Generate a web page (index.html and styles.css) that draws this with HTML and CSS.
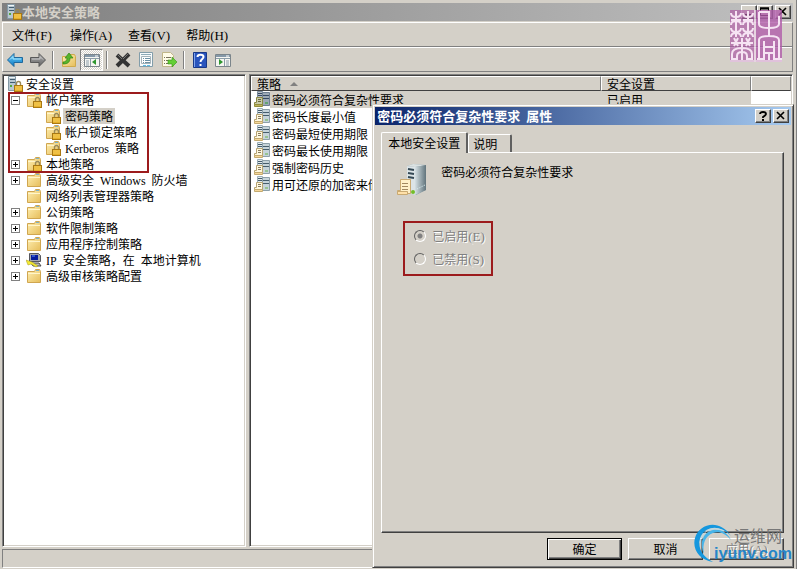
FILE: index.html
```html
<!DOCTYPE html>
<html lang="zh-CN">
<head>
<meta charset="utf-8">
<title>本地安全策略</title>
<link rel="stylesheet" href="styles.css">
</head>
<body>
<svg class="sprite" aria-hidden="true">
  <defs>
    <linearGradient id="gold" x1="0" y1="0" x2="1" y2="1"><stop offset="0" stop-color="#fff0b4"/><stop offset="1" stop-color="#e6bd5a"/></linearGradient>
    <linearGradient id="steel" x1="0" y1="0" x2="1" y2="0"><stop offset="0" stop-color="#d5e0e4"/><stop offset="1" stop-color="#61747c"/></linearGradient>
    <linearGradient id="blue" x1="0" y1="0" x2="0" y2="1"><stop offset="0" stop-color="#6fd0fa"/><stop offset="1" stop-color="#0b78c4"/></linearGradient>
    <linearGradient id="grey" x1="0" y1="0" x2="0" y2="1"><stop offset="0" stop-color="#b0b0b0"/><stop offset="1" stop-color="#636363"/></linearGradient>
  </defs>
  <symbol id="lock" viewBox="0 0 16 16">
    <path d="M9.5 10V7.5a2 2 0 0 1 4 0V10" fill="none" stroke="#9a8a58" stroke-width="1.4"/>
    <rect x="7.5" y="9.5" width="8" height="6" fill="#e5ae28" stroke="#a97812"/>
    <path d="M8 11h7M8 13h7" stroke="#ffdc70" stroke-width=".8"/>
  </symbol>
  <symbol id="folder" viewBox="0 0 16 16">
    <path d="M1.5 3.5h7l1-2h4l1 2v11h-13z" fill="url(#gold)" stroke="#d0a650"/>
    <path d="M10 2.5h3" stroke="#7eb2c8"/><path d="M2 5.5h12" stroke="#fff5cb"/>
  </symbol>
  <symbol id="folder-lock" viewBox="0 0 16 16"><use href="#folder"/><use href="#lock"/></symbol>
  <symbol id="server-lock" viewBox="0 0 16 16">
    <path d="M1.5.5h7v14h-7z" fill="#b9c8d1" stroke="#8499a5"/>
    <path d="M3 3.5h5M3 6.5h5" stroke="#425d70"/><path d="M2 1.5h6" stroke="#eff5f7"/><path d="M3 10h2" stroke="#55a83a" stroke-width="2"/>
    <use href="#lock"/>
  </symbol>
  <symbol id="policy" viewBox="0 0 16 16">
    <path d="M3.5.5h5v12h-5z" fill="#e2eaed" stroke="#9baeb7"/><path d="M8.5 1.5h7v13h-7z" fill="#c6d4da" stroke="#8da0aa"/>
    <path d="M4 2.5h4M4 4.5h4M9 4.5h6M9 7.5h6" stroke="#475e6c"/><path d="M11 12h3" stroke="#69b348"/>
    <path d="M2.5 6.5h6v7H.5v-2h2z" fill="#fff8df" stroke="#b8a472"/><path d="M4 8.5h3M4 10.5h3" stroke="#887c60"/>
    <path d="M.5 13.5h8v2h-8z" fill="#f6d79a" stroke="#c3aa6f"/>
  </symbol>
  <symbol id="big-policy" viewBox="0 0 32 32">
    <path d="M10 2l6-2 13 1v25l-10 5-9-2z" fill="#8fa0a7"/><path d="M10 2l6-2 13 1-11 2z" fill="#dbe2e2"/><path d="M18 3l11-2v25l-11 5z" fill="url(#steel)"/>
    <path d="M10 2l8 1v28l-8-2z" fill="#dce4e7"/><path d="M11 5l6 1M11 9l6 1M11 13l6 1" stroke="#354955" stroke-width="2"/>
    <path d="M20 25l8-4" stroke="#d8eef0" stroke-dasharray="1 1"/><circle cx="16" cy="28" r="2" fill="#74bd28"/>
    <path d="M3.5 15.5h10v14h-13v-3h3z" fill="#fff0c9" stroke="#c9a971"/><path d="M5 19.5h6M5 22.5h6M5 25.5h6" stroke="#a18861"/>
    <path d="M.5 27.5h10v3H.5z" fill="#ffe0a8" stroke="#c9a971"/>
  </symbol>
  <symbol id="ip" viewBox="0 0 16 16">
    <path d="M3.5 1.5h9l2 2v6h-11z" fill="#a6a8ae" stroke="#55565d"/><path d="M5 3h7v5H5z" fill="#061c9e"/><path d="M6 4h3" stroke="#5b8dfd"/>
    <path d="M5 11h8l2 3H7z" fill="#b7b7b7" stroke="#4b4b50"/><path d="M0 8l6 2 6 4-2 1-5-3-3 1z" fill="#f5ea32" stroke="#a29924" stroke-width=".5"/>
  </symbol>
  <symbol id="back" viewBox="0 0 16 16"><path d="M.5 8L7 1.5v4h8.500v5H7v4z" fill="url(#blue)" stroke="#20699d"/><path d="M3 7.5l3-3v2.500h8" fill="none" stroke="#a7e8ff"/></symbol>
  <symbol id="forward" viewBox="0 0 16 16"><path d="M15.500 8L9 1.500v4H.5v5H9v4z" fill="url(#grey)" stroke="#595959"/><path d="M2 7h8V4.500l3 3" fill="none" stroke="#c7c7c7"/></symbol>
  <symbol id="up" viewBox="0 0 16 16"><path d="M1.500 4.500h6l1-2h5l1 2v10h-13z" fill="url(#gold)" stroke="#cfaa4d"/><path d="M2 10c3 0 4-2 4-4H4l4-5 4 5H9c0 4-2 6-7 6z" fill="#57b52b" stroke="#318414" stroke-width=".7"/></symbol>
  <symbol id="pane-left" viewBox="0 0 16 16"><path d="M.5 2.500h15v12H.5z" fill="#f6f6f2" stroke="#7b858b"/><path d="M1 3h14v2H1z" fill="#8598a8"/><path d="M1 6.500h14M6.500 7v7M2 9h3M2 11h3M2 13h3" stroke="#8c9da9"/><path d="M12 7v6l-4-3z" fill="#2d962f"/><path d="M11 4h3" stroke="#fff"/></symbol>
  <symbol id="pane-right" viewBox="0 0 16 16"><path d="M.5 2.500h15v12H.5z" fill="#f6f6f2" stroke="#7b858b"/><path d="M1 3h14v2H1z" fill="#8598a8"/><path d="M1 6.500h14M9.500 7v7M11 9h3M11 11h3M11 13h3" stroke="#8c9da9"/><path d="M4 7v6l4-3z" fill="#2d962f"/><path d="M11 4h3" stroke="#fff"/></symbol>
  <symbol id="delete" viewBox="0 0 16 16"><path d="M2 3l12 11M14 2L2 14" stroke="#333" stroke-width="4"/><path d="M2 2l5 5M14 1L8 7" stroke="#777"/></symbol>
  <symbol id="props" viewBox="0 0 16 16"><path d="M1.500.5h13v14h-13z" fill="#f8fbfc" stroke="#829daa"/><path d="M3 2.500h10" stroke="#8eabb8"/><path d="M3.500 4.500h9v7h-9z" fill="#fff" stroke="#a4b3ba"/><path d="M5 6.500h1M7 6.500h5M5 8.500h1M7 8.500h5M5 10.500h1M7 10.500h5" stroke="#6c91a5"/><path d="M5 13.500h3M9 13.500h3" stroke="#5ebfe8"/></symbol>
  <symbol id="export" viewBox="0 0 16 16"><path d="M1.500.5h8l3 3v11h-11z" fill="#fffbe7" stroke="#c0b68a"/><path d="M3 5.500h1M5 5.500h5M3 8.500h1M5 8.500h4M3 11.500h1M5 11.500h4" stroke="#78715b"/><path d="M7 8h4V5l5 5-5 5v-3H7z" fill="#64cf35" stroke="#368e18" stroke-width=".6"/></symbol>
  <symbol id="help" viewBox="0 0 16 16"><path d="M1.500.5h13v15h-13z" fill="#2954bd" stroke="#183887"/><path d="M2.500 1v14" stroke="#7ea3ed"/><path d="M5.500 5c0-3 6-3 6 0 0 2-3 2-3 5" fill="none" stroke="#fff" stroke-width="2"/><path d="M7.500 12h2v2h-2z" fill="#fff"/></symbol>
</svg>

<main class="window">
  <header class="titlebar inactive">
    <svg class="icon"><use href="#server-lock"/></svg>
    <h1>本地安全策略</h1>
    <div class="caption-buttons">
      <button class="caption" aria-label="最小化"><svg viewBox="0 0 12 10"><path d="M2 8h6" stroke="#000" stroke-width="2"/></svg></button>
      <button class="caption" aria-label="最大化"><svg viewBox="0 0 12 10"><path d="M1.500 1v7.500h8V1M1 1h9" fill="none" stroke="#000"/><path d="M1 1.500h9" stroke="#000" stroke-width="2"/></svg></button>
      <button class="caption close" aria-label="关闭"><svg viewBox="0 0 12 10"><path d="M2 1l7 7M9 1L2 8" stroke="#000" stroke-width="1.600"/></svg></button>
    </div>
  </header>
  <div class="bars">
    <nav class="menubar">
      <button>文件<span class="key">(F)</span></button><button>操作<span class="key">(A)</span></button><button>查看<span class="key">(V)</span></button><button>帮助<span class="key">(H)</span></button>
    </nav>
    <div class="toolbar">
      <button aria-label="后退"><svg class="icon"><use href="#back"/></svg></button>
      <button aria-label="前进"><svg class="icon"><use href="#forward"/></svg></button>
      <span class="separator"></span>
      <button aria-label="上一级"><svg class="icon"><use href="#up"/></svg></button>
      <button class="pressed" aria-label="显示控制台树"><svg class="icon"><use href="#pane-left"/></svg></button>
      <span class="separator"></span>
      <button aria-label="删除"><svg class="icon"><use href="#delete"/></svg></button>
      <button aria-label="属性"><svg class="icon"><use href="#props"/></svg></button>
      <button aria-label="导出列表"><svg class="icon"><use href="#export"/></svg></button>
      <span class="separator"></span>
      <button aria-label="帮助"><svg class="icon"><use href="#help"/></svg></button>
      <button aria-label="显示操作窗格"><svg class="icon"><use href="#pane-right"/></svg></button>
    </div>
  </div>

  <div class="panes">
    <section class="pane tree-pane">
      <div class="root"><svg class="icon"><use href="#server-lock"/></svg><span class="label">安全设置</span></div>
      <ul class="tree">
        <li><div class="node"><button class="expander" aria-label="折叠"></button><svg class="icon"><use href="#folder-lock"/></svg><span class="label">帐户策略</span></div>
          <ul>
            <li class="node"><svg class="icon"><use href="#folder-lock"/></svg><span class="label selected">密码策略</span></li>
            <li class="node"><svg class="icon"><use href="#folder-lock"/></svg><span class="label">帐户锁定策略</span></li>
            <li class="node"><svg class="icon"><use href="#folder-lock"/></svg><span class="label"><span class="latin">Kerberos</span><span class="space"> </span>策略</span></li>
          </ul>
        </li>
        <li class="node"><button class="expander plus" aria-label="展开"></button><svg class="icon"><use href="#folder-lock"/></svg><span class="label">本地策略</span></li>
        <li class="node"><button class="expander plus" aria-label="展开"></button><svg class="icon"><use href="#folder"/></svg><span class="label">高级安全<span class="space"> </span><span class="latin">Windows</span><span class="space"> </span>防火墙</span></li>
        <li class="node"><span class="no-expander"></span><svg class="icon"><use href="#folder"/></svg><span class="label">网络列表管理器策略</span></li>
        <li class="node"><button class="expander plus" aria-label="展开"></button><svg class="icon"><use href="#folder"/></svg><span class="label">公钥策略</span></li>
        <li class="node"><button class="expander plus" aria-label="展开"></button><svg class="icon"><use href="#folder"/></svg><span class="label">软件限制策略</span></li>
        <li class="node"><button class="expander plus" aria-label="展开"></button><svg class="icon"><use href="#folder"/></svg><span class="label">应用程序控制策略</span></li>
        <li class="node"><button class="expander plus" aria-label="展开"></button><svg class="icon"><use href="#ip"/></svg><span class="label"><span class="latin">IP</span><span class="space"> </span>安全策略，在<span class="space"> </span>本地计算机</span></li>
        <li class="node"><button class="expander plus" aria-label="展开"></button><svg class="icon"><use href="#folder"/></svg><span class="label">高级审核策略配置</span></li>
      </ul>
      <div class="highlight"></div>
    </section>
    <section class="pane list-pane">
      <table>
        <colgroup><col class="col-policy"><col class="col-setting"><col></colgroup>
        <thead><tr><th>策略<span class="sort"></span></th><th>安全设置</th><th></th></tr></thead>
        <tbody>
          <tr class="current"><td><div class="cell"><svg class="icon"><use href="#policy"/></svg><span class="name">密码必须符合复杂性要求</span></div></td><td>已启用</td><td></td></tr>
          <tr><td><div class="cell"><svg class="icon"><use href="#policy"/></svg><span class="name">密码长度最小值</span></div></td><td></td><td></td></tr>
          <tr><td><div class="cell"><svg class="icon"><use href="#policy"/></svg><span class="name">密码最短使用期限</span></div></td><td></td><td></td></tr>
          <tr><td><div class="cell"><svg class="icon"><use href="#policy"/></svg><span class="name">密码最长使用期限</span></div></td><td></td><td></td></tr>
          <tr><td><div class="cell"><svg class="icon"><use href="#policy"/></svg><span class="name">强制密码历史</span></div></td><td></td><td></td></tr>
          <tr><td><div class="cell"><svg class="icon"><use href="#policy"/></svg><span class="name">用可还原的加密来储</span></div></td><td></td><td></td></tr>
        </tbody>
      </table>
    </section>
  </div>
  <footer class="statusbar"></footer>

  <svg class="seal" viewBox="0 0 52 52" aria-hidden="true">
    <path d="M0 0h24v52H0z" fill="#ac5ba4" opacity=".7"/><path d="M26 0h26v52H26z" fill="#b05daa" opacity=".8"/>
    <path d="M24 0h2v52h-2zM0 50h52v2H0z" fill="#ead5e6" opacity=".8"/>
    <g fill="none" stroke="#f6e3f3" stroke-width="2">
      <path d="M1 3q0 4 5 4t5-4M6 1v26M1 10h10M1 15q0-4 5-4t5 4M1 18q0 4 5 4t5-4M1 27q0-4 5-4t5 4"/>
      <path d="M13 3q0 4 5 4t5-4M18 1v26M13 10h10M13 15q0-4 5-4t5 4M13 18q0 4 5 4t5-4M13 27q0-4 5-4t5 4"/>
      <path d="M1 33h22M4 28l4 8M8 28l-4 8M12 28v9M16 28l4 8M20 28l-4 8M2 50V44q0-6 10-6t10 6v6M7 50v-4q0-4 5-4t5 4v4M1 49h6M17 49h6M12 38v12"/>
      <path d="M29 2h10v8M29 2v12q0 4 10 4t10-4V6M39 10v16M29 50V30q0-4 10-4t10 4v20M34 50V31M44 31v19M34 37h10M34 43h10M27 49h7M39 43v7M44 49h8"/>
    </g>
  </svg>

  <section class="dialog" role="dialog" aria-labelledby="dialog-title">
    <header class="titlebar active">
      <h2 id="dialog-title">密码必须符合复杂性要求<span class="space"> </span>属性</h2>
      <div class="caption-buttons">
        <button class="caption" aria-label="帮助"><svg viewBox="0 0 12 10"><path d="M3 3q0-2 3-2t3 2q0 1-3 3v1" fill="none" stroke="#000" stroke-width="1.800"/><path d="M5 8h2v2H5z"/></svg></button>
        <button class="caption close" aria-label="关闭"><svg viewBox="0 0 12 10"><path d="M2 1l7 7M9 1L2 8" stroke="#000" stroke-width="1.600"/></svg></button>
      </div>
    </header>
    <div class="dialog-body">
      <div class="tabs" role="tablist"><button class="tab chosen" role="tab" aria-selected="true">本地安全设置</button><button class="tab" role="tab">说明</button></div>
      <div class="tab-panel" role="tabpanel">
        <div class="policy-title"><svg class="big-icon"><use href="#big-policy"/></svg><p>密码必须符合复杂性要求</p></div>
        <fieldset class="options">
          <label><input type="radio" name="state" checked disabled><span>已启用<span class="key">(E)</span></span></label>
          <label><input type="radio" name="state" disabled><span>已禁用<span class="key">(S)</span></span></label>
        </fieldset>
      </div>
      <div class="actions">
        <button class="push default">确定</button><button class="push">取消</button><button class="push" disabled>应用<span class="key">(A)</span></button>
      </div>
    </div>
  </section>

  <div class="watermark">
    <svg class="swirl" viewBox="0 0 40 40" aria-hidden="true">
      <path d="M19 39C5 37-2 26 1 15 5 1 25-5 37 13 27 2 13 2 7 13c-4 9-1 19 12 26z" fill="#1597de"/>
      <path d="M10 31C5 20 9 9 19 7c8-1 14 2 18 10-6-7-12-9-18-7-8 3-11 11-9 21z" fill="#48b4e9"/>
      <path d="M6 20C7 9 17 2 30 8" fill="none" stroke="#b4ddf0"/>
    </svg>
    <span class="site-name">运维网</span><span class="site-url">iyunv.com</span>
  </div>
</main>
</body>
</html>
```
FILE: styles.css
```css
* { box-sizing: border-box; }

body {
  margin: 0;
  background: #d4d0c8;
  color: #000;
  font: 12px/16px "Noto Sans CJK SC", sans-serif;
}

button { margin: 0; padding: 0; border: 0; background: none; color: inherit; font: inherit; }
ul { margin: 0; padding: 0; list-style: none; }
h1, h2 { margin: 0; font-size: 13px; line-height: 16px; }
p { margin: 0; }

.sprite { position: absolute; width: 0; height: 0; }
.icon { display: block; flex: none; width: 16px; height: 16px; }
.latin, .key { font-family: "Liberation Serif", serif; line-height: 1; }
.key { font-size: 13px; }
.space { font-family: "Liberation Mono", monospace; font-size: 10px; line-height: 1; white-space: pre; }

.window {
  position: relative;
  display: flex;
  flex-direction: column;
  height: 100vh;
  min-height: 400px;
  padding: 3px 3px 1px 2px;
  border-right: 1px solid #808080;
  overflow: hidden;
}

.titlebar { display: flex; flex: none; align-items: center; height: 18px; padding: 0 2px 0 4px; white-space: nowrap; }
.titlebar.inactive { background: linear-gradient(90deg, #808080, #c0c0c0); color: #d4d0c8; }
.titlebar.active { background: linear-gradient(90deg, #0a246a, #a6caf0); color: #fff; padding-left: 2px; }
.caption-buttons { display: flex; margin-left: auto; }
.caption {
  width: 16px;
  height: 14px;
  padding: 1px;
  border: 1px solid;
  border-color: #fff #404040 #404040 #fff;
  background: #d4d0c8;
  box-shadow: inset -1px -1px #808080;
}
.caption svg { display: block; width: 12px; height: 10px; }
.caption.close { margin-left: 2px; }

.bars { flex: none; margin-top: 1px; border: 1px solid; border-color: #fff #808080 #808080 #fff; }
.menubar { display: flex; gap: 16px; height: 24px; padding-left: 9px; border-bottom: 1px solid #808080; }
.menubar button { min-width: 42px; text-align: left; white-space: nowrap; }
.toolbar { display: flex; align-items: center; height: 24px; border-top: 1px solid #fff; }
.toolbar button { display: grid; place-items: center; width: 23px; height: 22px; }
.toolbar .pressed { border: 1px solid; border-color: #808080 #fff #fff #808080; background: repeating-conic-gradient(#fff 0 25%, #d4d0c8 0 50%) 0 0 / 2px 2px; }
.separator { width: 2px; height: 18px; margin: 0 3px; border-left: 1px solid #808080; border-right: 1px solid #fff; }

.panes { display: flex; flex: 1; gap: 3px; min-height: 0; margin-top: 2px; }
.pane { position: relative; border: 1px solid; border-color: #808080 #fff #fff #808080; background: #fff; box-shadow: inset 1px 1px #404040, inset -1px -1px #d4d0c8; overflow: hidden; padding: 1px; }
.tree-pane { flex: 0 0 31%; max-width: 244px; padding: 1px 4px; }
.list-pane { flex: 1; }

.root, .node { display: flex; align-items: center; height: 16px; white-space: nowrap; }
.root .label { margin-left: 1px; }
.label { height: 16px; padding: 0 2px; margin-left: 2px; }
.selected { background: #d4d0c8; }
.tree { padding-left: 4px; }
.tree ul { padding-left: 34px; }
div.node, li.node { width: max-content; }
.expander, .no-expander { flex: none; width: 9px; height: 9px; margin-right: 6px; }
.expander { border: 1px solid #808080; background: linear-gradient(#000, #000) center / 5px 1px no-repeat; }
.plus { background: linear-gradient(#000, #000) center / 5px 1px no-repeat, linear-gradient(#000, #000) center / 1px 5px no-repeat; }
.highlight { position: absolute; top: 17px; left: 5px; width: 141px; height: 81px; border: 2px solid #9c1b1d; }

table { width: 100%; border-collapse: separate; border-spacing: 0; table-layout: fixed; }
.col-policy { width: 350px; }
.col-setting { width: 150px; }
th { height: 15px; padding: 0 5px; border: 1px solid; border-color: #fff #808080 #404040 #fff; background: #d4d0c8; font-weight: normal; line-height: 13px; text-align: left; }
.sort { display: inline-block; margin: 0 0 3px 9px; border: 4px solid transparent; border-top: 0; border-bottom-color: #808080; }
td { height: 17px; padding: 0 6px; line-height: 17px; white-space: nowrap; overflow: hidden; }
td:first-child { padding: 0 0 0 3px; }
.cell { display: flex; height: 17px; }
.name { flex: 1; padding-left: 2px; }
.current .name, .current td:nth-child(2) { background: #d4d0c8; }
.current .icon { filter: brightness(.8) hue-rotate(15deg) saturate(1.500); }

.statusbar { flex: none; height: 19px; margin-top: 2px; border: 1px solid; border-color: #808080 #fff #fff #808080; }

.seal { position: absolute; top: 10px; right: 14px; width: 52px; height: 52px; }

.dialog {
  position: absolute;
  top: 104px;
  right: 2px;
  bottom: 1px;
  display: flex;
  flex-direction: column;
  width: 53%;
  min-width: 380px;
  padding: 2px;
  border: 1px solid;
  border-color: #d4d0c8 #404040 #404040 #d4d0c8;
  background: #d4d0c8;
  box-shadow: inset 1px 1px #fff, inset -1px -1px #808080;
}
.dialog-body { display: flex; flex: 1; flex-direction: column; padding: 7px 7px 5px 6px; }
.tabs { display: flex; align-items: flex-end; height: 20px; }
.tab { height: 18px; padding: 0 13px 0 4px; border: 1px solid #fff; border-right: 2px solid #606060; border-bottom: 0; border-radius: 2px 2px 0 0; line-height: 18px; }
.chosen { position: relative; height: 21px; margin-bottom: -1px; padding: 0 6px; background: #d4d0c8; }
.tab-panel { flex: 1; padding: 11px 15px; border: 1px solid; border-color: #fff #404040 #404040 #fff; box-shadow: inset -1px -1px #808080; }
.policy-title { display: flex; gap: 12px; }
.big-icon { width: 32px; height: 32px; }
.options { display: flex; flex-direction: column; gap: 7px; width: 90px; margin: 25px 0 0 6px; padding: 5px 4px 7px 9px; border: 2px solid #9c1b1d; color: #808080; text-shadow: 1px 1px #fff; }
.options label { display: flex; align-items: center; gap: 6px; height: 16px; white-space: nowrap; }
.options input { appearance: none; flex: none; width: 12px; height: 12px; margin: 0; border: 1px solid; border-color: #606060 #fff #fff #606060; border-radius: 50%; }
.options input:checked { background: radial-gradient(circle, #808080 2px, transparent 3px); }

.actions { display: flex; justify-content: flex-end; gap: 6px; margin-top: 5px; }
.push { width: 75px; height: 22px; border: 1px solid; border-color: #fff #404040 #404040 #fff; background: #d4d0c8; box-shadow: inset -1px -1px #808080; }
.default { border-color: #000; box-shadow: inset 1px 1px #fff, inset -1px -1px #404040, inset -2px -2px #808080; }
.push:disabled { color: #808080; text-shadow: 1px 1px #fff; }

.watermark { position: absolute; right: 4px; bottom: 6px; display: grid; grid-template-columns: 20px auto; justify-items: end; width: 100px; }
.swirl { position: absolute; top: -2px; left: 2px; width: 40px; height: 40px; }
.site-name { grid-column: 2; padding-right: 10px; color: #777; font-size: 16px; line-height: 20px; }
.site-url { position: relative; grid-column: 2; color: #2585c8; font: bold 16px/18px "Liberation Sans", sans-serif; }
```
